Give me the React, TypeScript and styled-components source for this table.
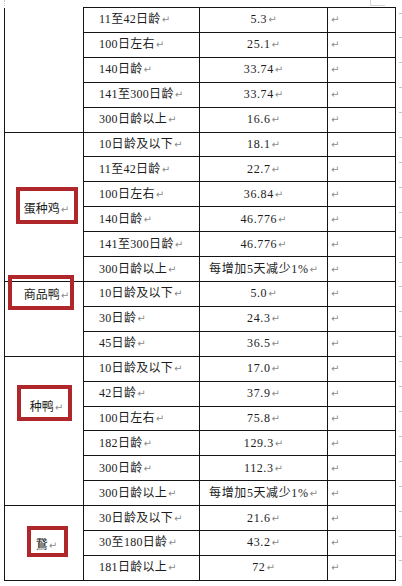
import React from 'react'
import styled, { createGlobalStyle } from 'styled-components'

const GlobalStyle = createGlobalStyle`
  html, body {
    margin: 0;
    padding: 0;
    background: #ffffff;
    overflow: hidden;
  }
`

const Page = styled.div`
  width: 402px;
  height: 586px;
  overflow: hidden;
  background: #ffffff;
  font-family: "Liberation Serif", "Noto Sans CJK SC", serif;
  font-size: 12px;
  color: #1c1c1c;
`

const TopMarks = styled.div`
  display: flex;
  height: 7px;
`

const CornerLeft = styled.span`
  width: 4px;
  height: 6px;
  border-right: 1px dotted #c8c8c8;
`

const CornerRight = styled.span`
  margin-left: 365px;
  width: 14px;
  height: 5px;
  border-left: 1px solid #d4d4d4;
  border-bottom: 1px solid #d4d4d4;
`

const Table = styled.table`
  margin-left: 4px;
  border-collapse: collapse;
  table-layout: fixed;
  width: 398px;
`

const Row = styled.tr`
  height: 24.91px;
`

const Cell = styled.td<{ $open?: boolean }>`
  border: 1px solid #141414;
  border-top: ${(p) => (p.$open ? 'none' : '1px solid #141414')};
  padding: 0;
  white-space: nowrap;
  line-height: 14px;
`

const LabelCell = styled(Cell)<{ $pad: number }>`
  vertical-align: top;
  text-align: center;
  padding: ${(p) => p.$pad}px 0 0 5px;
`

const AgeCell = styled(Cell)`
  padding-left: 15px;
  letter-spacing: 0.3px;
`

const ValueCell = styled(Cell)`
  text-align: center;
  letter-spacing: 0.6px;
`

const NoteCell = styled(Cell)`
  padding-left: 2px;
`

const EndCell = styled.td`
  border: none;
  padding: 5px 0 0 3px;
  vertical-align: top;
  line-height: 0;
`

/* end-of-row marker, half cut off by the page edge in the shot */
const RowEnd = styled.span`
  display: inline-block;
  width: 3px;
  height: 4px;
  border-top: 1px solid #c4c4c4;
  border-right: 1px solid #c4c4c4;
`

const Label = styled.span`
  position: relative;
  display: inline-block;
  letter-spacing: 0;
`

const Callout = styled.span<{ $x: number; $y: number; $w: number; $h: number }>`
  position: absolute;
  left: ${(p) => p.$x}px;
  top: ${(p) => p.$y}px;
  width: ${(p) => p.$w}px;
  height: ${(p) => p.$h}px;
  box-sizing: border-box;
  border: 4px solid #b0272b;
  pointer-events: none;
`

const Para = styled.span`
  font-family: "DejaVu Sans", sans-serif;
  font-size: 10px;
  color: #8c8c8c;
  margin-left: 1px;
  letter-spacing: 0;
`

type Box = { x: number; y: number; w: number; h: number }

type Group = {
  label: string
  pad: number
  box?: Box
  rows: [string, string][]
}

const groups: Group[] = [
  {
    label: '',
    pad: 0,
    rows: [
      ['11至42日龄', '5.3'],
      ['100日左右', '25.1'],
      ['140日龄', '33.74'],
      ['141至300日龄', '33.74'],
      ['300日龄以上', '16.6'],
    ],
  },
  {
    label: '蛋种鸡',
    pad: 69,
    box: { x: -8, y: -15, w: 62, h: 37 },
    rows: [
      ['10日龄及以下', '18.1'],
      ['11至42日龄', '22.7'],
      ['100日左右', '36.84'],
      ['140日龄', '46.776'],
      ['141至300日龄', '46.776'],
      ['300日龄以上', '每增加5天减少1%'],
    ],
  },
  {
    label: '商品鸭',
    pad: 6,
    box: { x: -16, y: -13, w: 66, h: 35 },
    rows: [
      ['10日龄及以下', '5.0'],
      ['30日龄', '24.3'],
      ['45日龄', '36.5'],
    ],
  },
  {
    label: '种鸭',
    pad: 43,
    box: { x: -13, y: -15, w: 55, h: 36 },
    rows: [
      ['10日龄及以下', '17.0'],
      ['42日龄', '37.9'],
      ['100日左右', '75.8'],
      ['182日龄', '129.3'],
      ['300日龄', '112.3'],
      ['300日龄以上', '每增加5天减少1%'],
    ],
  },
  {
    label: '鵞',
    pad: 32,
    box: { x: -9, y: -12, w: 41, h: 31 },
    rows: [
      ['30日龄及以下', '21.6'],
      ['30至180日龄', '43.2'],
      ['181日龄以上', '72'],
    ],
  },
]

const Mark = () => <Para>↵</Para>

const App = (): JSX.Element => {
  return (
    <Page>
      <GlobalStyle />
      <TopMarks>
        <CornerLeft />
        <CornerRight />
      </TopMarks>
      <Table>
        <colgroup>
          <col style={{ width: 79 }} />
          <col style={{ width: 116 }} />
          <col style={{ width: 128 }} />
          <col style={{ width: 68 }} />
          <col style={{ width: 7 }} />
        </colgroup>
        <tbody>
          {groups.map((g, gi) =>
            g.rows.map(([age, value], ri) => (
              <Row key={`${gi}-${ri}`}>
                {ri === 0 && (
                  <LabelCell rowSpan={g.rows.length} $pad={g.pad} $open={gi === 0}>
                    {g.label && (
                      <Label>
                        {g.label}
                        <Mark />
                        {g.box && <Callout $x={g.box.x} $y={g.box.y} $w={g.box.w} $h={g.box.h} />}
                      </Label>
                    )}
                  </LabelCell>
                )}
                <AgeCell>
                  {age}
                  <Mark />
                </AgeCell>
                <ValueCell>
                  {value}
                  <Mark />
                </ValueCell>
                <NoteCell>
                  <Mark />
                </NoteCell>
                <EndCell>
                  <RowEnd />
                </EndCell>
              </Row>
            )),
          )}
        </tbody>
      </Table>
    </Page>
  )
}

export default App
